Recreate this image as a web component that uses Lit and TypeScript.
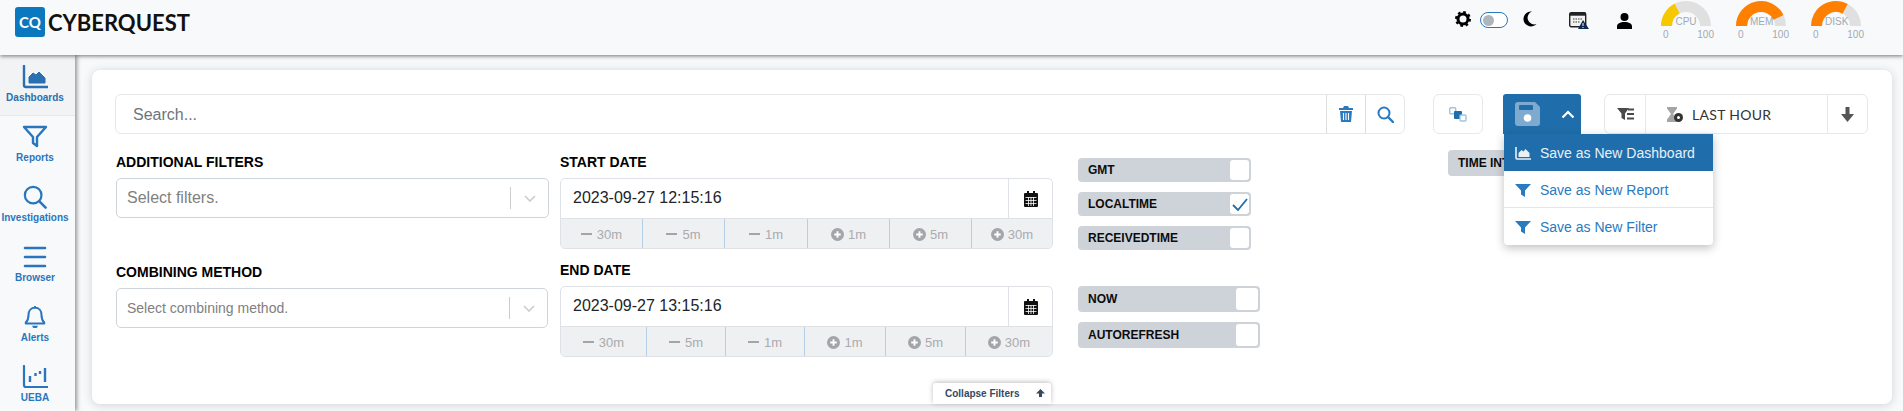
import { LitElement, html, css } from "lit";
import { customElement } from "lit/decorators.js";

const sideItems = [
  { label: "Dashboards", active: true, icon: html`<svg viewBox="0 0 26 24" width="26" height="24"><path d="M2 1v19a2 2 0 0 0 2 2h22" fill="none" stroke="currentColor" stroke-width="2.4" stroke-linecap="round"/><path d="M7 18v-6l4-4 3 2 3-3 4 4 2 2v5z" fill="currentColor" stroke="currentColor" stroke-linejoin="round"/></svg>` },
  { label: "Reports", icon: html`<svg viewBox="0 0 26 24" width="26" height="24"><path d="M2 2h22l-9 10v9l-4-3v-6z" fill="none" stroke="currentColor" stroke-width="2.4" stroke-linejoin="round"/></svg>` },
  { label: "Investigations", icon: html`<svg viewBox="0 0 26 26" width="26" height="26"><circle cx="11" cy="11" r="9" fill="none" stroke="currentColor" stroke-width="2.4"/><path d="M17.5 17.5 24.5 24.5" stroke="currentColor" stroke-width="2.8" stroke-linecap="round"/></svg>` },
  { label: "Browser", icon: html`<svg viewBox="0 0 26 24" width="26" height="24"><path d="M3 3h20M3 12h20M3 21h20" stroke="currentColor" stroke-width="2.6" stroke-linecap="round"/></svg>` },
  { label: "Alerts", icon: html`<svg viewBox="0 0 26 26" width="26" height="26"><path d="M13 3c-4.500 0-7 3.500-7 7.500 0 4.500-1 6.500-3 8.500v1h20v-1c-2-2-3-4-3-8.500C20 6.500 17.500 3 13 3z" fill="none" stroke="currentColor" stroke-width="2.200" stroke-linejoin="round"/><path d="M12 1h2v2h-2zM10 22.500h6a3 2.500 0 0 1-6 0z" fill="currentColor"/></svg>` },
  { label: "UEBA", icon: html`<svg viewBox="0 0 26 24" width="26" height="24"><path d="M2 1v19a2 2 0 0 0 2 2h22" fill="none" stroke="currentColor" stroke-width="2.2" stroke-linecap="round"/><path d="M8 11v6M13.500 8v3M18 6v3M23 3v14" stroke="currentColor" stroke-width="2.400"/></svg>` },
];

const chartIcon = html`<svg viewBox="0 0 16 14" width="16" height="14"><path d="M1 1v11a1 1 0 0 0 1 1h14" fill="none" stroke="currentColor" stroke-width="1.600"/><path d="M3.500 11V7l3-3 2 1.500L10.500 3l4 4v4z" fill="currentColor"/></svg>`;
const funnelIcon = html`<svg viewBox="0 0 16 14" width="16" height="14"><path d="M0 1h16l-6 6.500V14l-4-2.500V7.500z" fill="currentColor"/></svg>`;

const gauges = [
  { label: "CPU", frac: 0.35, color: "#f6c800" },
  { label: "MEM", frac: 0.855, color: "#ff7f00" },
  { label: "DISK", frac: 0.655, color: "#ff7f00" },
];

function arcPath(frac: number) {
  const a = Math.PI * (1 - frac);
  const r = 19.5;
  return `M5.500 26A${r} ${r} 0 0 1 ${(25 + r * Math.cos(a)).toFixed(2)} ${(26 - r * Math.sin(a)).toFixed(2)}`;
}

const startQuick = ["30m", "5m", "1m", "1m", "5m", "30m"];

function quickRow(widths: number[]) {
  return html`<div class="quick">
    ${startQuick.map(
      (t, i) => html`<div class="q" style="width:${widths[i]}px">
        ${i < 3
          ? html`<span class="minus"></span>`
          : html`<svg viewBox="0 0 14 14" width="13" height="13"><circle cx="7" cy="7" r="7" fill="#a3a5a8"/><path d="M3.500 7h7M7 3.500v7" stroke="#fff" stroke-width="2"/></svg>`}
        <span>${t}</span>
      </div>`
    )}
  </div>`;
}

const calIcon = html`<svg viewBox="0 0 14 16" width="14" height="16"><path d="M3 0h2v2h4V0h2v2h2a1 1 0 0 1 1 1v12a1 1 0 0 1-1 1H1a1 1 0 0 1-1-1V3a1 1 0 0 1 1-1h2z" fill="#111"/><path d="M1.500 6.500h11M1.500 9.500h11M1.500 12.500h11M4.500 6v9M7 6v9M9.500 6v9" stroke="#fff" stroke-width=".8"/></svg>`;

@customElement("app-root")
export class AppRoot extends LitElement {
  static styles = css`
    :host {
      display: block;
      height: 100vh;
      overflow: hidden;
      background: #f8f9fb;
      font-family: "Liberation Sans", Arial, sans-serif;
    }
    svg { display: block; }
    .header {
      height: 55px;
      background: #f8f9fa;
      box-shadow: 0 1px 4px rgba(0,0,0,.55);
      display: flex;
      align-items: flex-start;
      position: relative;
      z-index: 3;
    }
    .logo { display: flex; align-items: center; margin: 7px 0 0 15px; }
    .logo-box {
      width: 30px; height: 30px; border-radius: 3px; background: #0a78bf; color: #fff;
      font: 700 15px Lato, sans-serif; display: flex; align-items: center; justify-content: center;
    }
    .logo-text { font: 700 22px Lato, sans-serif; color: #111; margin-left: 3px; }
    .head-right { margin-left: auto; display: flex; align-items: flex-start; padding-right: 17px; }
    .ic { margin-top: 11px; }
    .toggle {
      width: 28px; height: 16px; box-sizing: border-box; border: 1.500px solid #2a76bd; border-radius: 8px;
      margin: 12px 0 0 9px; display: flex; align-items: center; padding-left: 1.500px; background: #fff;
    }
    .toggle i { width: 11px; height: 11px; border-radius: 50%; background: #adb5bd; display: block; }
    .gauge { width: 54px; margin-right: 21px; position: relative; }
    .gauge svg { overflow: visible; }
    .gauge-label { position: absolute; left: 14px; top: 15px; width: 22px; text-align: center; font-size: 10px; color: #a0aab4; line-height: 14px; }
    .gauge-nums { display: flex; justify-content: space-between; font-size: 10px; color: #a0aab4; padding: 0 1px 0 2px; line-height: 14px; margin-top: 2px; }
    .body { display: flex; height: calc(100vh - 55px); }
    .side {
      width: 75px; flex: none; background: #f8f9fb; box-shadow: 2px 0 4px rgba(0,0,0,.4); position: relative; z-index: 2; padding-top: 1px;
    }
    .s-item {
      height: 60px; box-sizing: border-box; display: flex; flex-direction: column; align-items: center; color: #2a76bd;
      padding: 9px 5px 0 0; font-size: 10px; font-weight: 700;
    }
    .s-item.active { background: #f1f3f4; color: #2a6fb0; border-bottom: 1px solid #e6e8ea; }
    .s-item svg { height: 24px; }
    .s-item span { margin-top: 3px; line-height: 12px; white-space: nowrap; }
    .main { flex: 1; padding: 15px 11px 7px 17px; min-width: 0; }
    .card {
      background: #fff; border-radius: 8px; height: 100%; box-sizing: border-box; position: relative;
      box-shadow: 0 1px 10px rgba(0,0,0,.16); padding: 24px 24px 0 23px;
    }
    .top { display: flex; height: 40px; }
    .outlined { border: 1px solid #e6e8ea; border-radius: 6px; box-sizing: border-box; display: flex; align-items: stretch; background: #fff; }
    .search { width: 1290px; }
    .search .ph { flex: 1; font-size: 16px; color: #6c757d; padding: 1px 0 0 17px; line-height: 38px; }
    .cell { display: flex; align-items: center; justify-content: center; border-left: 1px solid #dcdfe2; width: 38px; flex: none; color: #2a7abf; }
    .link-btn { width: 50px; margin-left: 28px; align-items: center; justify-content: center; }
    .save {
      width: 78px; margin-left: 20px; background: #1f6eab; border-radius: 3px 3px 0 0; position: relative; display: flex; align-items: center;
      padding-left: 12px; box-sizing: border-box;
    }
    .save .chev { margin-left: 21px; }
    .range { width: 264px; margin-left: 23px; }
    .range .a { width: 40px; display: flex; align-items: center; justify-content: center; }
    .range .b {
      flex: 1; border-left: 1px solid #e6e8ea; border-right: 1px solid #e6e8ea; display: flex; align-items: center;
      padding-left: 20px; font: 14px Lato, sans-serif; color: #333; letter-spacing: .3px;
    }
    .range .b span { margin-left: 9px; }
    .range .c { width: 39px; display: flex; align-items: center; justify-content: center; }
    .menu {
      position: absolute; left: 0; top: 40px; width: 209px; background: #fff; border-radius: 0 0 4px 4px;
      box-shadow: 0 3px 10px rgba(0,0,0,.25); font-size: 14px; color: #2a7abf; z-index: 5; margin-left: 1px;
    }
    .menu div { height: 37px; display: flex; align-items: center; padding-left: 11px; box-sizing: border-box; }
    .menu div span { margin-left: 9px; }
    .menu .on { background: #1f6eab; color: #e8f0f8; }
    .menu .sep { border-bottom: 1px solid #e4e6e8; padding-top: 1px; }
    .filters { display: flex; padding-left: 1px; margin-top: 16px; }
    .col1 { width: 433px; }
    .label { font-size: 14px; font-weight: 700; color: #000; height: 28px; line-height: 24px; }
    .select {
      height: 40px; border: 1px solid #ced4da; border-radius: 5px; box-sizing: border-box; display: flex; align-items: center; padding-left: 10px;
      font-size: 16px; color: #808080;
    }
    .select.small { font-size: 14px; width: 432px; }
    .select .ph { flex: 1; }
    .select .bar { width: 1px; height: 22px; background: #ccc; }
    .select .arrow { width: 37px; display: flex; justify-content: center; }
    .gap-a { height: 42px; }
    .col2 { width: 493px; margin-left: 11px; }
    .dategroup { border: 1px solid #dee2e6; border-radius: 5px; box-sizing: border-box; height: 71px; overflow: hidden; }
    .date-in { height: 39px; display: flex; align-items: center; }
    .date-in .val { flex: 1; font-size: 16px; color: #212529; padding: 0 0 2px 12px; }
    .date-in .cal { width: 43px; height: 100%; border-left: 1px solid #dee2e6; display: flex; align-items: center; justify-content: center; }
    .quick { display: flex; height: 31px; background: #eff0f2; border-top: 1px solid #dee2e6; box-sizing: border-box; }
    .q {
      display: flex; align-items: center; justify-content: center; gap: 4px; font-size: 13px; color: #a9abae; box-sizing: border-box;
      border-right: 1px solid #b5d0e6; flex: none;
    }
    .q:last-child { border-right: none; flex: 1; }
    .minus { width: 11px; height: 2px; background: #a3a5a8; margin-right: 1px; }
    .gap-b { height: 9px; }
    .col3 { width: 182px; margin-left: 25px; padding-top: 8px; }
    .sw {
      background: #ced3da; border-radius: 4px; display: flex; align-items: center; justify-content: space-between; box-sizing: border-box;
      font-size: 12px; font-weight: 700; color: #0c0c0c; padding: 2px 2px 2px 10px;
    }
    .sw i { display: flex; align-items: center; justify-content: center; background: #fff; border-radius: 3px; height: 100%; box-sizing: border-box; }
    .sw.s1 { height: 24px; width: 173px; margin-bottom: 10px; }
    .sw.s1 i { width: 19px; }
    .sw.s2 { height: 26px; width: 182px; margin-bottom: 10px; }
    .sw.s2 i { width: 22px; }
    .gap-c { height: 26px; }
    .col4 { margin-left: 188px; }
    .time { width: 180px; height: 26px; background: #ced3da; border-radius: 4px; font-size: 12px; font-weight: 700; color: #0c0c0c; padding-left: 10px; line-height: 26px; box-sizing: border-box; }
    .collapse {
      position: absolute; left: 841px; bottom: 0; width: 118px; height: 21px; background: #fff; border-radius: 3px 3px 0 0; box-sizing: border-box;
      box-shadow: 0 -1px 5px rgba(0,0,0,.25); display: flex; align-items: center; justify-content: space-between; padding: 0 6px 0 12px;
      font-size: 10px; font-weight: 700; color: #34495e;
    }
  `;

  render() {
    return html`
      <div class="header">
        <div class="logo">
          <div class="logo-box">CQ</div>
          <div class="logo-text">CYBERQUEST</div>
        </div>
        <div class="head-right">
          <svg class="ic" viewBox="0 0 16 16" width="16" height="16">
            <circle cx="8" cy="8" r="5" fill="none" stroke="#000" stroke-width="3"/>
            <circle cx="8" cy="8" r="7" fill="none" stroke="#000" stroke-width="2" stroke-dasharray="2.700 2.800"/>
          </svg>
          <div class="toggle"><i></i></div>
          <svg class="ic" viewBox="0 0 14 16" width="14" height="16" style="margin-left:15px">
            <path d="M9 0.500A7.500 7.500 0 1 0 13.500 13 6.500 6.500 0 0 1 9 0.500z" fill="#000"/>
          </svg>
          <svg class="ic" viewBox="0 0 20 17" width="20" height="17" style="margin-left:32px;margin-top:12px">
            <rect x="0.700" y="0.700" width="16" height="14" rx="1.500" fill="#f2f2f2" stroke="#222" stroke-width="1.400"/>
            <rect x="0.700" y="0.700" width="16" height="3" fill="#222"/>
            <path d="M4 7h9M4 10h7" stroke="#777" stroke-width="1.400" stroke-dasharray="1.500 1"/>
            <path d="M14 8l6 9h-11z" fill="#0e2a52"/>
            <path d="M14 11v3M14 15v1" stroke="#fff" stroke-width="1"/>
          </svg>
          <svg class="ic" viewBox="0 0 15 16" width="15" height="16" style="margin-left:28px;margin-top:13px">
            <circle cx="7.500" cy="4" r="4" fill="#000"/>
            <path d="M0 16v-2.500C0 10.500 3 9 7.500 9s7.500 1.500 7.500 4.500V16z" fill="#000"/>
          </svg>
          <div style="width:29px"></div>
          ${gauges.map(
            (g) => html`<div class="gauge">
              <svg viewBox="0 0 50 26" width="50" height="26">
                <path d="M5.500 26A19.500 19.500 0 0 1 44.500 26" fill="none" stroke="#e0e0e0" stroke-width="11"/>
                <path d="${arcPath(g.frac)}" fill="none" stroke="${g.color}" stroke-width="11"/>
              </svg>
              <div class="gauge-label">${g.label}</div>
              <div class="gauge-nums"><span>0</span><span>100</span></div>
            </div>`
          )}
        </div>
      </div>
      <div class="body">
        <div class="side">
          ${sideItems.map(
            (s) => html`<div class="s-item ${s.active ? "active" : ""}">${s.icon}<span>${s.label}</span></div>`
          )}
        </div>
        <div class="main">
          <div class="card">
            <div class="top">
              <div class="outlined search">
                <div class="ph">Search...</div>
                <div class="cell">
                  <svg viewBox="0 0 14 16" width="14" height="16"><path d="M5 0h4l1 2h4v2H0V2h4zM1 5h12l-1 11H2z" fill="#2a7abf"/><path d="M4.500 7v7M7 7v7M9.500 7v7" stroke="#fff" stroke-width="1.100"/></svg>
                </div>
                <div class="cell">
                  <svg viewBox="0 0 17 17" width="17" height="17"><circle cx="7" cy="7" r="5.500" fill="none" stroke="#2a7abf" stroke-width="2"/><path d="M11 11l5 5" stroke="#2a7abf" stroke-width="2.400" stroke-linecap="round"/></svg>
                </div>
              </div>
              <div class="outlined link-btn">
                <svg viewBox="0 0 18 15" width="18" height="15"><rect x="0.700" y="0.700" width="6" height="6" rx="1" fill="#fff" stroke="#9cc3e4" stroke-width="1.400"/><rect x="5" y="4" width="8" height="8" rx="1" fill="#1f6eab"/><rect x="11" y="8" width="6" height="6" rx="1" fill="#fff" stroke="#9cc3e4" stroke-width="1.400"/></svg>
              </div>
              <div class="save">
                <svg viewBox="0 0 25 24" width="25" height="24"><path d="M3 0h17l5 5v16a3 3 0 0 1-3 3H3a3 3 0 0 1-3-3V3a3 3 0 0 1 3-3z" fill="#7faacf"/><rect x="4" y="3" width="14" height="5" rx="1" fill="#1f6eab"/><circle cx="12.500" cy="16" r="3.800" fill="#fff"/></svg>
                <svg class="chev" viewBox="0 0 14 9" width="14" height="9"><path d="M1.500 7.500 7 2l5.500 5.500" fill="none" stroke="#fff" stroke-width="2.200"/></svg>
                <div class="menu">
                  <div class="on">${chartIcon}<span>Save as New Dashboard</span></div>
                  <div class="sep">${funnelIcon}<span>Save as New Report</span></div>
                  <div>${funnelIcon}<span>Save as New Filter</span></div>
                </div>
              </div>
              <div class="outlined range">
                <div class="a">
                  <svg viewBox="0 0 17 12" width="17" height="12"><path d="M0 0h12L8 5.500V12L4.500 10V5.500z" fill="#4a4a4a"/><path d="M11 1.500h6M10 6h7M10 10.500h7" stroke="#4a4a4a" stroke-width="2"/></svg>
                </div>
                <div class="b">
                  <svg viewBox="0 0 17 15" width="17" height="15"><path d="M1 0h10v1.500L7 7l4 5.500V15H1v-2.500L5 7 1 1.500z" fill="#a5a5a5"/><circle cx="12.500" cy="10.500" r="4.500" fill="#333"/><circle cx="12.500" cy="10.500" r="1.500" fill="#fff"/></svg>
                  <span>LAST HOUR</span>
                </div>
                <div class="c">
                  <svg viewBox="0 0 13 15" width="13" height="15"><path d="M4.500 0h4v7H13l-6.500 8L0 7h4.500z" fill="#555"/></svg>
                </div>
              </div>
            </div>
            <div class="filters">
              <div class="col1">
                <div class="label">ADDITIONAL FILTERS</div>
                <div class="select"><div class="ph">Select filters.</div><div class="bar"></div><div class="arrow"><svg viewBox="0 0 12 7" width="12" height="7"><path d="M1 1l5 5 5-5" fill="none" stroke="#ccc" stroke-width="1.600"/></svg></div></div>
                <div class="gap-a"></div>
                <div class="label">COMBINING METHOD</div>
                <div class="select small"><div class="ph">Select combining method.</div><div class="bar"></div><div class="arrow"><svg viewBox="0 0 12 7" width="12" height="7"><path d="M1 1l5 5 5-5" fill="none" stroke="#ccc" stroke-width="1.600"/></svg></div></div>
              </div>
              <div class="col2">
                <div class="label">START DATE</div>
                <div class="dategroup">
                  <div class="date-in"><div class="val">2023-09-27 12:15:16</div><div class="cal">${calIcon}</div></div>
                  ${quickRow([82, 82, 83, 82, 82, 82])}
                </div>
                <div class="gap-b"></div>
                <div class="label">END DATE</div>
                <div class="dategroup">
                  <div class="date-in"><div class="val">2023-09-27 13:15:16</div><div class="cal">${calIcon}</div></div>
                  ${quickRow([86, 79, 79, 81, 80, 88])}
                </div>
              </div>
              <div class="col3">
                <div class="sw s1"><span>GMT</span><i></i></div>
                <div class="sw s1"><span>LOCALTIME</span><i><svg viewBox="0 0 16 13" width="16" height="13"><path d="M1 7l5 5 9-11" fill="none" stroke="#1f6eab" stroke-width="1.800"/></svg></i></div>
                <div class="sw s1"><span>RECEIVEDTIME</span><i></i></div>
                <div class="gap-c"></div>
                <div class="sw s2"><span>NOW</span><i></i></div>
                <div class="sw s2"><span>AUTOREFRESH</span><i></i></div>
              </div>
              <div class="col4"><div class="time">TIME INTERVAL</div></div>
            </div>
            <div class="collapse"><span>Collapse Filters</span>
              <svg viewBox="0 0 9 9" width="9" height="9"><path d="M4.500 0 9 4.500H6V8H3V4.500H0z" fill="#34495e"/></svg>
            </div>
          </div>
        </div>
      </div>
    `;
  }
}
